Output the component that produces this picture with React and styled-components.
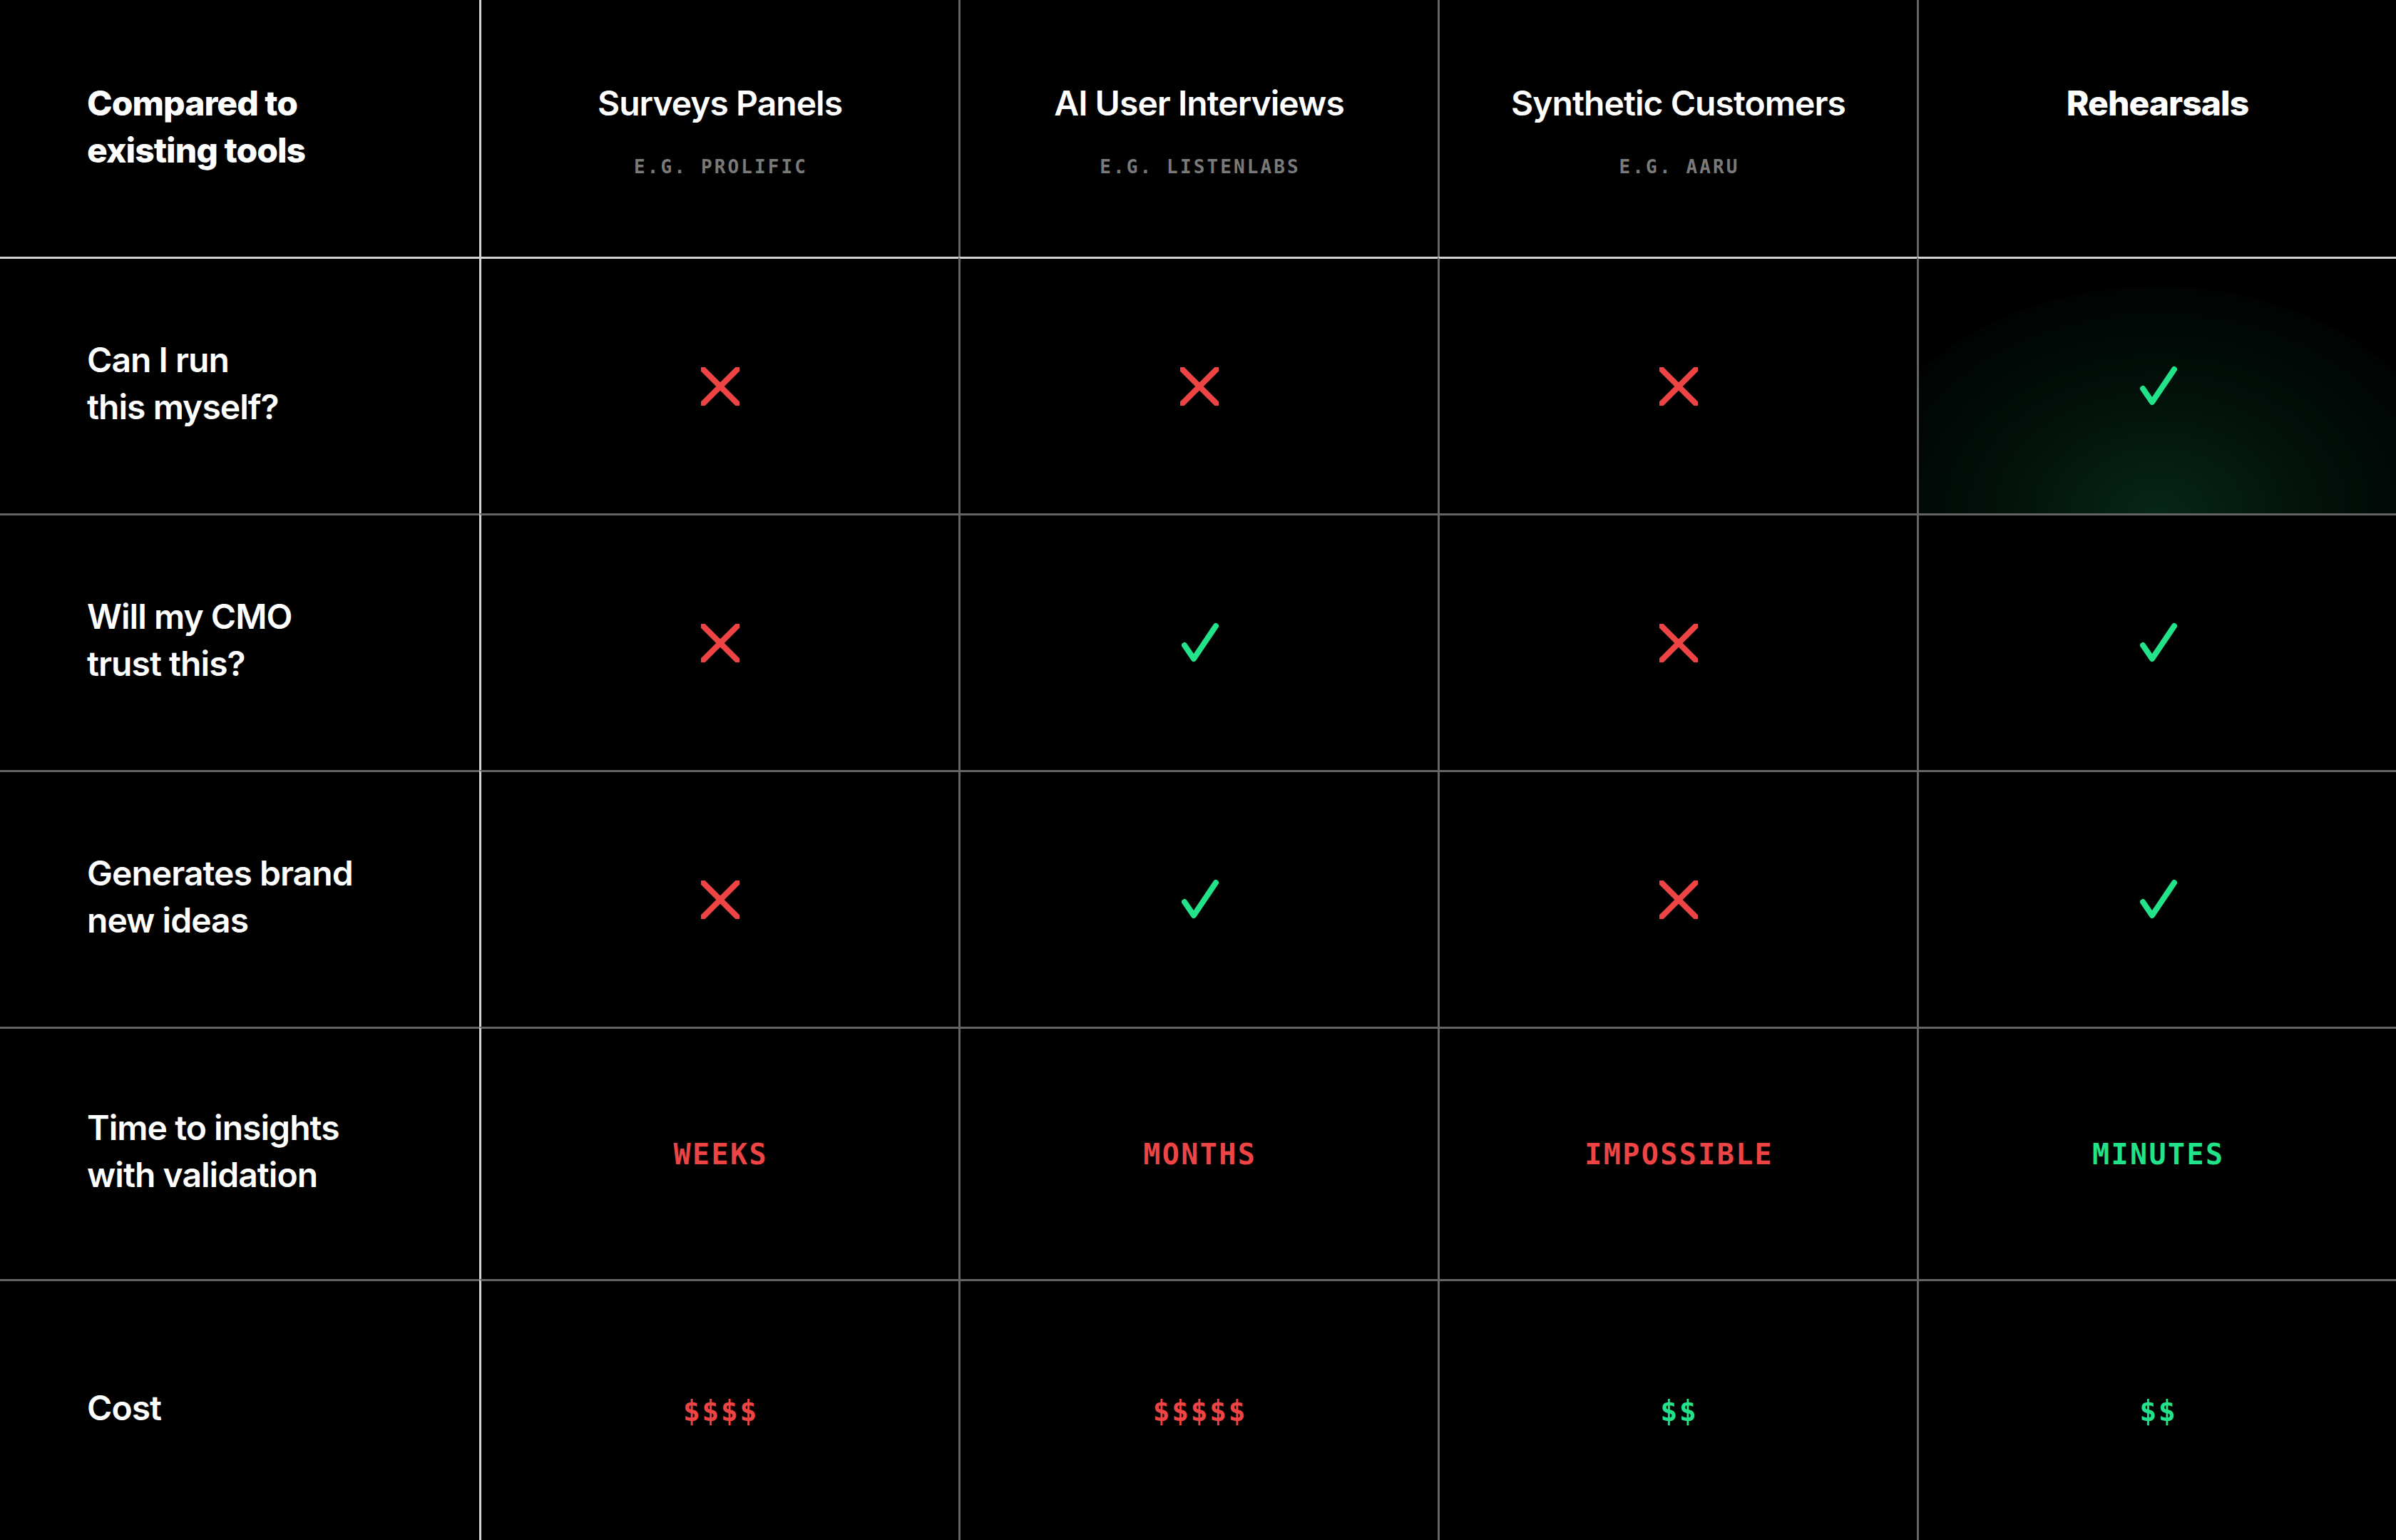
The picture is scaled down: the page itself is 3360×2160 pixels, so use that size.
// Imports
import React from "react";
import styled, { createGlobalStyle } from "styled-components";

// Data
const tools = [
	{ name: "Surveys Panels", example: "E.G. PROLIFIC" },
	{ name: "AI User Interviews", example: "E.G. LISTENLABS" },
	{ name: "Synthetic Customers", example: "E.G. AARU" },
	{ name: "Rehearsals", highlight: true }
];

const rows = [
	{ label: ["Can I run", "this myself?"], values: ["no", "no", "no", "yes"], glow: true },
	{ label: ["Will my CMO", "trust this?"], values: ["no", "yes", "no", "yes"] },
	{ label: ["Generates brand", "new ideas"], values: ["no", "yes", "no", "yes"] },
	{ label: ["Time to insights", "with validation"], values: [
		{ text: "WEEKS", good: false },
		{ text: "MONTHS", good: false },
		{ text: "IMPOSSIBLE", good: false },
		{ text: "MINUTES", good: true }
	] },
	{ label: ["Cost"], values: [
		{ text: "$$$$", good: false },
		{ text: "$$$$$", good: false },
		{ text: "$$", good: true },
		{ text: "$$", good: true }
	] }
];

// Icons
const Cross = () => (
	<svg width="54" height="54" viewBox="0 0 54 54">
		<path d="M-3 -3L57 57M57 -3L-3 57" stroke="#ef4444" strokeWidth="8" fill="none" />
	</svg>
);

const Check = () => (
	<svg width="56" height="57" viewBox="0 0 56 57">
		<path d="M7 32L20 51L51 5" stroke="#22e38a" strokeWidth="8" fill="none" strokeLinecap="round" strokeLinejoin="round" />
	</svg>
);

// Component
const App = () => {

	const renderValue = (value) => {
		if(value === "yes") return <Check />;
		if(value === "no") return <Cross />;
		return <Value $good={ value.good }>{ value.text }</Value>;
	};

	return(
		<>
			<GlobalStyle />
			<Table>
				<HeadCell $row={ 0 } $col={ 0 } $left>
					<Label $bold>Compared to<br />existing tools</Label>
				</HeadCell>
				{ tools.map((tool, i) => (
					<HeadCell key={ tool.name } $row={ 0 } $col={ i + 1 }>
						<Title $bold={ tool.highlight }>{ tool.name }</Title>
						{ tool.example && <Example>{ tool.example }</Example> }
					</HeadCell>
				)) }
				{ rows.map((row, r) => (
					<React.Fragment key={ row.label.join(" ") }>
						<Cell $row={ r + 1 } $col={ 0 } $left>
							<Label $raised>
								{ row.label.map((line, l) => (
									<React.Fragment key={ line }>
										{ l > 0 && <br /> }
										{ line }
									</React.Fragment>
								)) }
							</Label>
						</Cell>
						{ row.values.map((value, c) => (
							<Cell key={ c } $row={ r + 1 } $col={ c + 1 } $glow={ row.glow && c === 3 }>
								{ renderValue(value) }
							</Cell>
						)) }
					</React.Fragment>
				)) }
			</Table>
		</>
	);

};

// Styled
const GlobalStyle = createGlobalStyle`
	html, body{
		margin: 0;
		padding: 0;
		background: #000;
	}
	body{
		font-family: Inter, "Noto Sans", sans-serif;
		color: #fff;
	}
`;

const Table = styled.div`
	display: grid;
	grid-template-columns: repeat(5, 1fr);
	grid-template-rows: 360px 360px 360px 360px 354px 366px;
	width: 3360px;
	height: 2160px;
	background: #000;
	overflow: hidden;
`;

const lineColor = (bright) => bright ? "#d4d4d4" : "#646464";

const Cell = styled.div`
	display: flex;
	align-items: center;
	justify-content: ${ p => p.$left ? "flex-start" : "center" };
	padding-left: ${ p => p.$left ? "122px" : "0" };
	border-left: ${ p => p.$col === 0 ? "none" : `3px solid ${ lineColor(p.$col === 1) }` };
	border-top: ${ p => p.$row === 0 ? "none" : `3px solid ${ lineColor(p.$row === 1) }` };
	background: ${ p => p.$glow
		? "radial-gradient(430px 320px at 50% 100%, rgba(34, 227, 138, 0.17) 0%, rgba(34, 227, 138, 0.07) 55%, rgba(34, 227, 138, 0.015) 99%, transparent 100%)"
		: "transparent" };
	min-width: 0;
`;

const HeadCell = styled(Cell)`
	flex-direction: column;
	align-items: ${ p => p.$left ? "flex-start" : "center" };
	justify-content: flex-start;
	padding-top: 112px;
`;

const Label = styled.div`
	margin-bottom: ${ p => p.$raised ? "8px" : "0" };
	font-size: 48px;
	line-height: 66px;
	font-weight: ${ p => p.$bold ? 800 : 600 };
	letter-spacing: -0.02em;
	color: #fff;
`;

const Title = styled.div`
	font-size: 48px;
	line-height: 66px;
	font-weight: ${ p => p.$bold ? 800 : 600 };
	letter-spacing: -0.02em;
	color: #fff;
	white-space: nowrap;
`;

const Example = styled.div`
	margin-top: 40px;
	font-family: "DejaVu Sans Mono", "Liberation Mono", monospace;
	font-size: 26px;
	line-height: 32px;
	font-weight: 700;
	letter-spacing: 0.12em;
	padding-left: 0.12em;
	color: #7a7a7a;
`;

const Value = styled.span`
	font-family: "DejaVu Sans Mono", "Liberation Mono", monospace;
	font-size: 40px;
	line-height: 48px;
	font-weight: 700;
	letter-spacing: 0.06em;
	padding-left: 0.06em;
	color: ${ p => p.$good ? "#22e38a" : "#ef4444" };
`;

// Export
export default App;
